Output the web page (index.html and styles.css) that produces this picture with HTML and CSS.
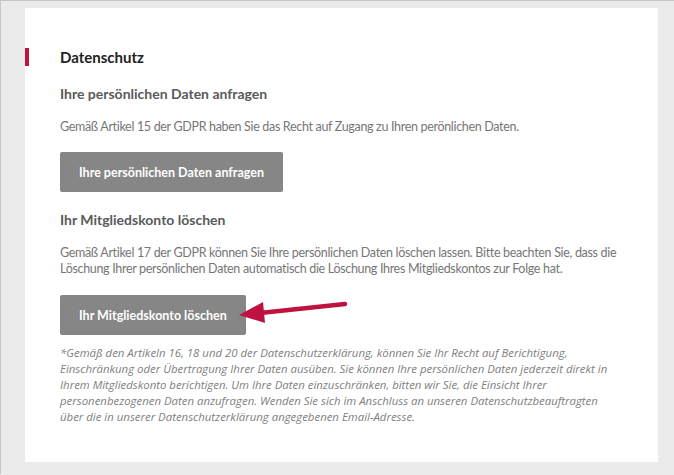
FILE: index.html
```html
<!DOCTYPE html>
<html lang="de">
<head>
    <meta charset="UTF-8">
    <meta name="viewport" content="width=device-width, initial-scale=1.0">
    <title>Datenschutz</title>
    <link rel="stylesheet" href="styles.css">
</head>
<body>

    <div class="page">
        <div class="card">
            <h2 class="section-title">Datenschutz</h2>

            <div class="content">
                <h3>Ihre persönlichen Daten anfragen</h3>
                <p>Gemäß Artikel 15 der GDPR haben Sie das Recht auf Zugang zu Ihren perönlichen Daten.</p>
                <button class="btn">Ihre persönlichen Daten anfragen</button>

                <h3>Ihr Mitgliedskonto löschen</h3>
                <p>Gemäß Artikel 17 der GDPR können Sie Ihre persönlichen Daten löschen lassen. Bitte beachten Sie, dass die Löschung Ihrer persönlichen Daten automatisch die Löschung Ihres Mitgliedskontos zur Folge hat.</p>
                <button class="btn btn-delete">Ihr Mitgliedskonto löschen</button>

                <p class="note">*Gemäß den Artikeln 16, 18 und 20 der Datenschutzerklärung, können Sie Ihr Recht auf Berichtigung, Einschränkung oder Übertragung Ihrer Daten ausüben. Sie können Ihre persönlichen Daten jederzeit direkt in Ihrem Mitgliedskonto berichtigen. Um Ihre Daten einzuschränken, bitten wir Sie, die Einsicht Ihrer personenbezogenen Daten anzufragen. Wenden Sie sich im Anschluss an unseren Datenschutzbeauftragten über die in unserer Datenschutzerklärung angegebenen Email-Adresse.</p>
            </div>

            <!-- annotation arrow pointing at the delete button -->
            <svg class="arrow" width="120" height="32" viewBox="0 0 120 32">
                <line x1="25" y1="15" x2="110" y2="6" stroke="#c0123f" stroke-width="4.5" stroke-linecap="round"/>
                <polygon points="4,17 28,4 30,25" fill="#c0123f"/>
            </svg>
        </div>
    </div>

</body>
</html>
```

FILE: styles.css
```css
body {
    margin: 0;
    background-color: #ebebeb;
    font-family: 'Lato', 'Liberation Sans', sans-serif;
}
.page {
    height: 474px;
    border-top: 1px solid #c6c6c6;
    border-left: 1px solid #c6c6c6;
    padding: 7px 0 0 24px;
    box-sizing: border-box;
}
.card {
    position: relative;
    width: 633px;
    height: 454px;
    background-color: #fff;
    padding-top: 40px;
    box-sizing: border-box;
}
.section-title {
    margin: 0;
    border-left: 4px solid #c0123f;
    padding-left: 31px;
    font-size: 15px;
    line-height: 18px;
    font-weight: 700;
    color: #222;
}
.content {
    padding: 0 30px 0 35px;
}
h3 {
    margin: 19px 0 0;
    font-size: 14px;
    line-height: 18px;
    font-weight: 700;
    color: #5a5a5a;
}
p {
    margin: 16px 0 0;
    font-size: 12.5px;
    line-height: 16px;
    letter-spacing: -0.32px;
    color: #767676;
}
.btn {
    display: block;
    height: 40px;
    margin-top: 17px;
    padding: 0 19px;
    border: none;
    border-radius: 2px;
    background-color: #868686;
    color: #fff;
    font-family: inherit;
    font-size: 12.5px;
    font-weight: 700;
}
.btn-delete {
    margin-top: 18px;
}
.note {
    max-width: 557px;
    margin-top: 10px;
    font-family: 'Open Sans', sans-serif;
    font-style: italic;
    font-size: 11.4px;
    line-height: 16px;
    letter-spacing: 0;
    color: #808080;
}
.arrow {
    position: absolute;
    left: 210px;
    top: 290px;
}
```
